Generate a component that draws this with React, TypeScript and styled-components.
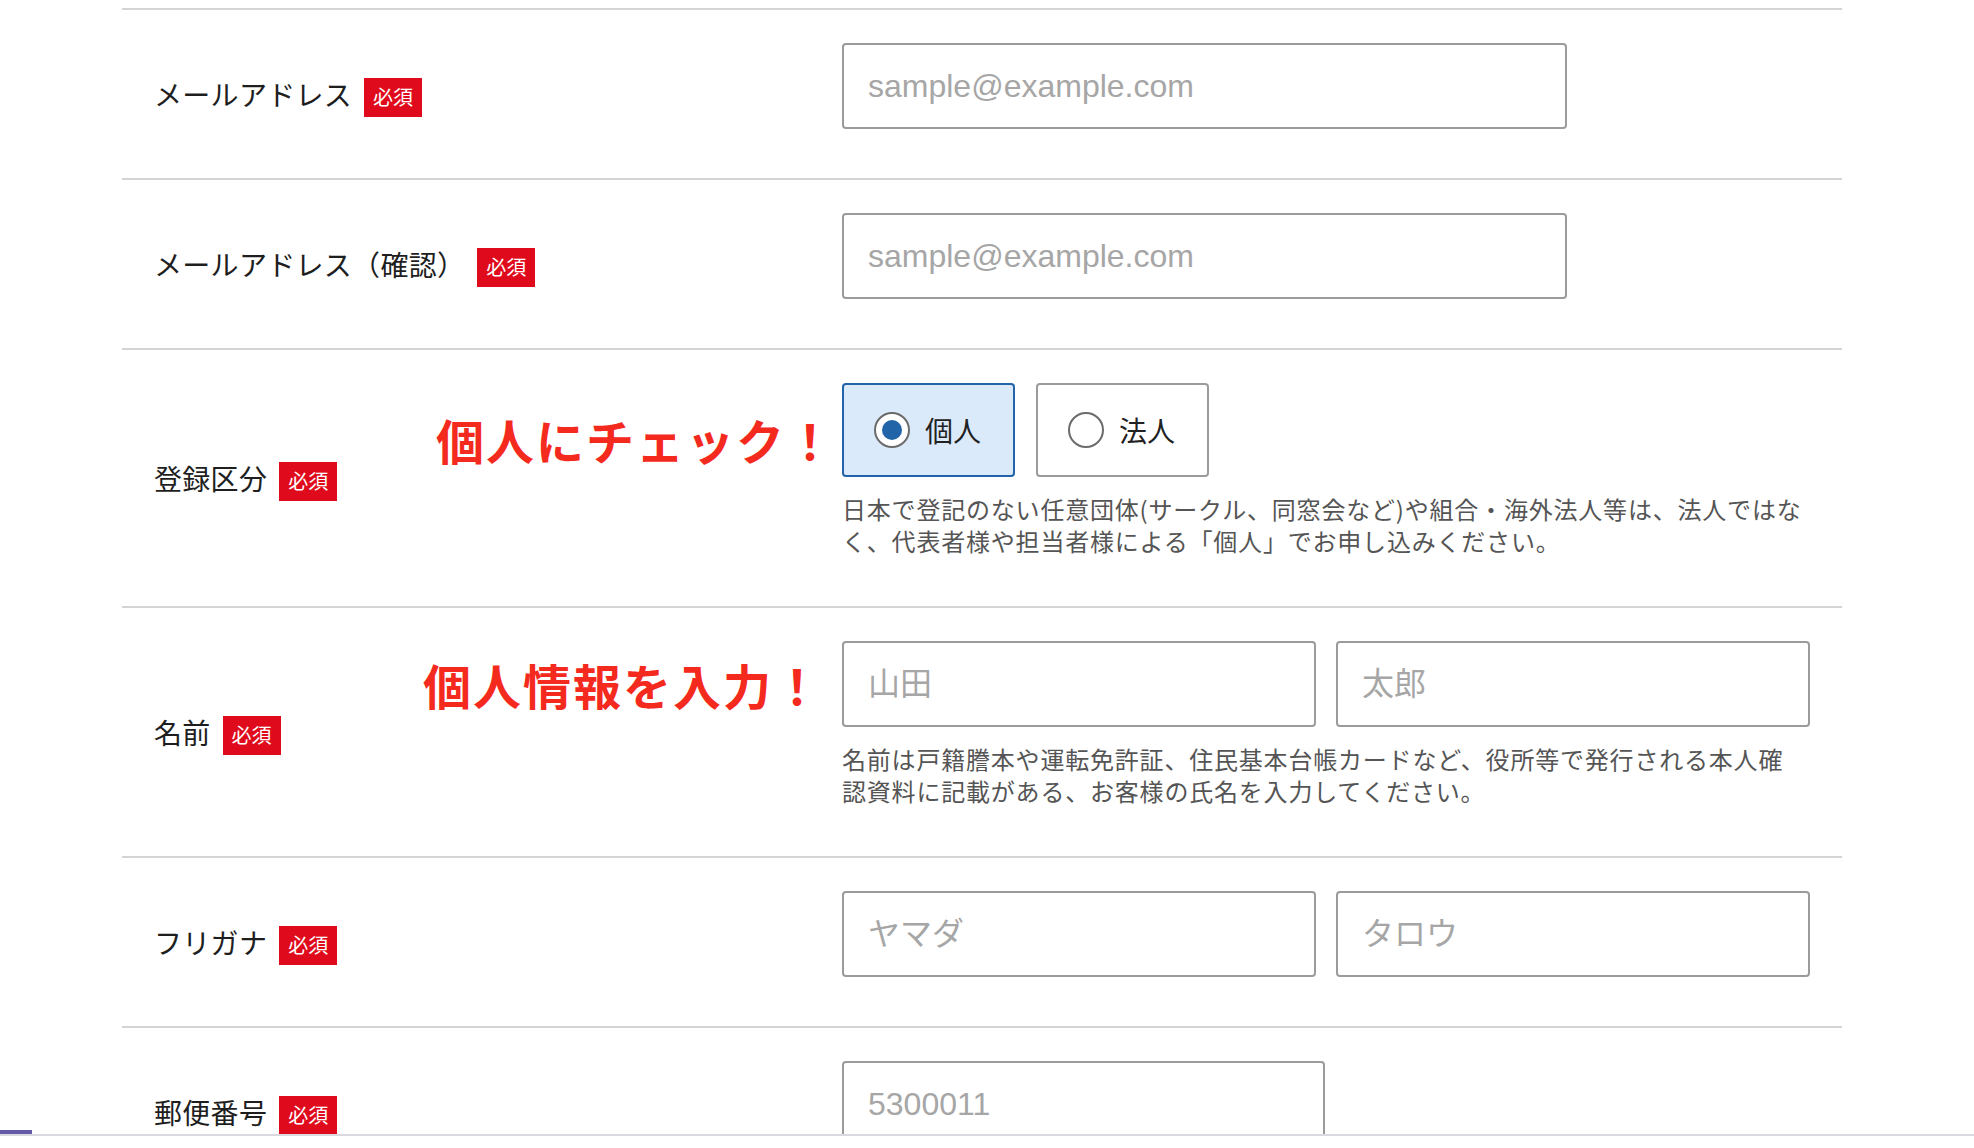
import React from 'react';
import styled, {createGlobalStyle} from 'styled-components';

const GlobalStyle = createGlobalStyle`
  html, body {
    margin: 0;
    padding: 0;
    background: #ffffff;
  }
  body {
    font-family: "Noto Sans CJK JP", "Noto Sans", sans-serif;
    color: #222222;
  }
  * {
    box-sizing: border-box;
  }
`;

const App = () => {
  return (
    <Page>
      <GlobalStyle />
      <Form>
        <Row>
          <Label>
            <LabelText>メールアドレス</LabelText>
            <Badge>必須</Badge>
          </Label>
          <Field>
            <TextInput $width={725} type="email" placeholder="sample@example.com" />
          </Field>
        </Row>

        <Row>
          <Label>
            <LabelText>メールアドレス（確認）</LabelText>
            <Badge>必須</Badge>
          </Label>
          <Field>
            <TextInput $width={725} type="email" placeholder="sample@example.com" />
          </Field>
        </Row>

        <Row>
          <Label>
            <LabelText>登録区分</LabelText>
            <Badge>必須</Badge>
          </Label>
          <Annotation $left={314} $top={65}>個人にチェック！</Annotation>
          <Field>
            <RadioGroup>
              <RadioBox $checked>
                <RadioCircle $checked />
                個人
              </RadioBox>
              <RadioBox>
                <RadioCircle />
                法人
              </RadioBox>
            </RadioGroup>
            <Help>
              日本で登記のない任意団体(サークル、同窓会など)や組合・海外法人等は、法人ではな
              <br />
              く、代表者様や担当者様による「個人」でお申し込みください。
            </Help>
          </Field>
        </Row>

        <Row>
          <Label>
            <LabelText>名前</LabelText>
            <Badge>必須</Badge>
          </Label>
          <Annotation $left={301} $top={52}>個人情報を入力！</Annotation>
          <Field>
            <InputPair>
              <TextInput $width={474} type="text" placeholder="山田" />
              <TextInput $width={474} type="text" placeholder="太郎" />
            </InputPair>
            <Help>
              名前は戸籍謄本や運転免許証、住民基本台帳カードなど、役所等で発行される本人確
              <br />
              認資料に記載がある、お客様の氏名を入力してください。
            </Help>
          </Field>
        </Row>

        <Row>
          <Label>
            <LabelText>フリガナ</LabelText>
            <Badge>必須</Badge>
          </Label>
          <Field>
            <InputPair>
              <TextInput $width={474} type="text" placeholder="ヤマダ" />
              <TextInput $width={474} type="text" placeholder="タロウ" />
            </InputPair>
          </Field>
        </Row>

        <Row>
          <Label>
            <LabelText>郵便番号</LabelText>
            <Badge>必須</Badge>
          </Label>
          <Field>
            <TextInput $width={483} type="text" placeholder="5300011" />
          </Field>
        </Row>
      </Form>
      <Footer>
        <Progress />
      </Footer>
    </Page>
  );
};

const Page = styled.div`
  padding-top: 8px;
  padding-bottom: 120px;
`;

const Form = styled.div`
  margin-left: 122px;
  width: 1720px;
  border-top: 2px solid #d4d4d4;
`;

const Row = styled.div`
  position: relative;
  display: grid;
  grid-template-columns: 688px 968px;
  padding: 0 32px;
  border-bottom: 2px solid #d4d4d4;
`;

const Label = styled.div`
  align-self: center;
  display: flex;
  align-items: center;
`;

const LabelText = styled.span`
  font-size: 28px;
  line-height: 40px;
  letter-spacing: 0.3px;
  color: #1e1e1e;
  white-space: nowrap;
`;

const Badge = styled.span`
  display: inline-flex;
  align-items: center;
  justify-content: center;
  height: 39px;
  margin-left: 12px;
  margin-top: 6px;
  padding: 0 9px;
  background: #df0b1c;
  color: #ffffff;
  font-size: 20px;
  line-height: 1;
`;

const Field = styled.div`
  padding: 33px 0 49px;
`;

const TextInput = styled.input<{$width: number}>`
  display: block;
  width: ${(p) => p.$width}px;
  height: 86px;
  padding: 0 24px;
  border: 2px solid #9b9b9b;
  border-radius: 4px;
  background: #ffffff;
  font-family: "Liberation Sans", "Noto Sans CJK JP", sans-serif;
  font-size: 32px;
  color: #222222;
  outline: none;

  &::placeholder {
    color: #a6a6a6;
  }
`;

const InputPair = styled.div`
  display: flex;
  gap: 20px;
`;

const RadioGroup = styled.div`
  display: flex;
  gap: 21px;
`;

const RadioBox = styled.label<{$checked?: boolean}>`
  display: flex;
  align-items: center;
  gap: 15px;
  width: 173px;
  height: 94px;
  padding-left: 30px;
  border: 2px solid ${(p) => (p.$checked ? '#2263a9' : '#9b9b9b')};
  border-radius: 4px;
  background: ${(p) => (p.$checked ? '#dbeafb' : '#ffffff')};
  font-size: 28px;
  color: #222222;
  cursor: pointer;
`;

const RadioCircle = styled.span<{$checked?: boolean}>`
  position: relative;
  flex: none;
  width: 36px;
  height: 36px;
  border: 2px solid #6b6b6b;
  border-radius: 50%;
  background: #ffffff;

  &::after {
    content: '';
    display: ${(p) => (p.$checked ? 'block' : 'none')};
    position: absolute;
    left: 6px;
    top: 6px;
    width: 20px;
    height: 20px;
    border-radius: 50%;
    background: #2164a8;
  }
`;

const Help = styled.p`
  margin: 16px 0 0;
  font-size: 24px;
  line-height: 32px;
  letter-spacing: 0.8px;
  color: #555555;
  white-space: nowrap;
`;

const Annotation = styled.span<{$left: number; $top: number}>`
  position: absolute;
  left: ${(p) => p.$left}px;
  top: ${(p) => p.$top}px;
  font-size: 48px;
  font-weight: 700;
  line-height: 1;
  letter-spacing: 2px;
  color: #f52a1e;
  white-space: nowrap;
`;

const Footer = styled.div`
  position: fixed;
  left: 0;
  right: 0;
  bottom: 0;
  height: 14px;
  border-top: 2px solid #d9d9df;
  background: #ffffff;
`;

const Progress = styled.div`
  position: absolute;
  left: 0;
  top: -6px;
  width: 32px;
  height: 4px;
  background: #6459a6;
`;

export default App;
